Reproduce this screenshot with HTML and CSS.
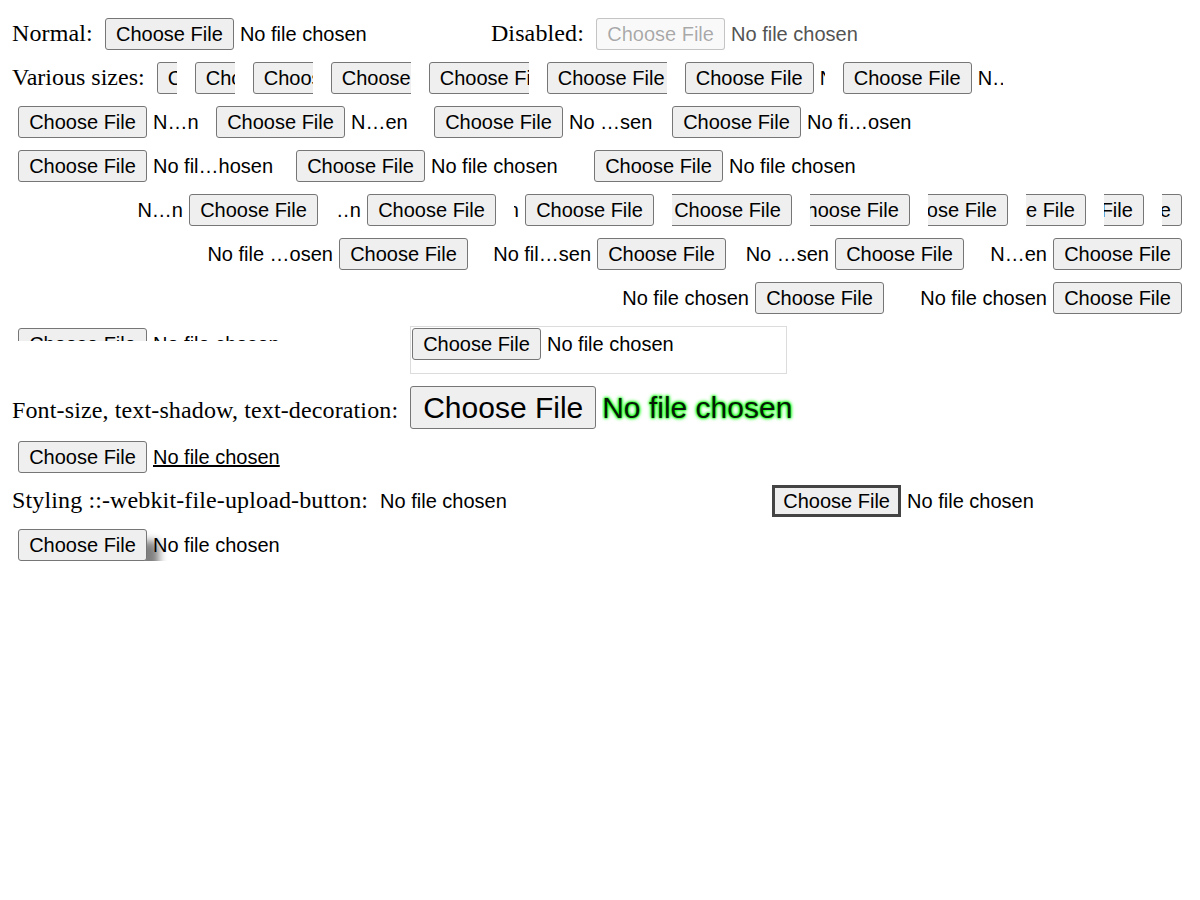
FILE: index.html
```html
<!DOCTYPE html>
<html>
<head>
<meta charset="utf-8">
<title>File inputs</title>
<link rel="stylesheet" href="styles.css">
</head>
<body>
<span class="lbl">Normal:</span> <span class="file"><button class="fbtn" type="button">Choose File</button><span class="flabel">No file chosen</span></span>
<span class="lbl">Disabled:</span> <span class="file is-disabled"><button class="fbtn" type="button" disabled>Choose File</button><span class="flabel">No file chosen</span></span>
<br>
Various sizes:
<span class="file w1"><button class="fbtn" type="button">Choose File</button><span class="flabel"></span></span>
<span class="file w2"><button class="fbtn" type="button">Choose File</button><span class="flabel"></span></span>
<span class="file w3"><button class="fbtn" type="button">Choose File</button><span class="flabel"></span></span>
<span class="file w4"><button class="fbtn" type="button">Choose File</button><span class="flabel"></span></span>
<span class="file w5"><button class="fbtn" type="button">Choose File</button><span class="flabel"></span></span>
<span class="file w6"><button class="fbtn" type="button">Choose File</button><span class="flabel"></span></span>
<span class="file w7"><button class="fbtn" type="button">Choose File</button><span class="flabel">N…n</span></span>
<span class="file w8"><button class="fbtn" type="button">Choose File</button><span class="flabel">N…n</span></span>
<span class="file w9"><button class="fbtn" type="button">Choose File</button><span class="flabel">N…n</span></span>
<span class="file w10"><button class="fbtn" type="button">Choose File</button><span class="flabel">N…en</span></span>
<span class="file w11"><button class="fbtn" type="button">Choose File</button><span class="flabel">No …sen</span></span>
<span class="file w12"><button class="fbtn" type="button">Choose File</button><span class="flabel">No fi…osen</span></span>
<span class="file w13"><button class="fbtn" type="button">Choose File</button><span class="flabel">No fil…hosen</span></span>
<span class="file w14"><button class="fbtn" type="button">Choose File</button><span class="flabel">No file chosen</span></span>
<span class="file w15"><button class="fbtn" type="button">Choose File</button><span class="flabel">No file chosen</span></span>
<div class="rtl" dir="rtl">
<span class="file w1"><button class="fbtn" type="button">Choose File</button><span class="flabel"></span></span>
<span class="file w2"><button class="fbtn" type="button">Choose File</button><span class="flabel"></span></span>
<span class="file w3"><button class="fbtn" type="button">Choose File</button><span class="flabel"></span></span>
<span class="file w4"><button class="fbtn" type="button">Choose File</button><span class="flabel"></span></span>
<span class="file w5"><button class="fbtn" type="button">Choose File</button><span class="flabel"></span></span>
<span class="file w6"><button class="fbtn" type="button">Choose File</button><span class="flabel"></span></span>
<span class="file w7"><button class="fbtn" type="button">Choose File</button><span class="flabel">N…n</span></span>
<span class="file w8"><button class="fbtn" type="button">Choose File</button><span class="flabel">N…n</span></span>
<span class="file w9"><button class="fbtn" type="button">Choose File</button><span class="flabel">N…n</span></span>
<span class="file w10"><button class="fbtn" type="button">Choose File</button><span class="flabel">N…en</span></span>
<span class="file w11"><button class="fbtn" type="button">Choose File</button><span class="flabel">No …sen</span></span>
<span class="file w12"><button class="fbtn" type="button">Choose File</button><span class="flabel">No fil…sen</span></span>
<span class="file w13"><button class="fbtn" type="button">Choose File</button><span class="flabel">No file …osen</span></span>
<span class="file w14"><button class="fbtn" type="button">Choose File</button><span class="flabel">No file chosen</span></span>
<span class="file w15"><button class="fbtn" type="button">Choose File</button><span class="flabel">No file chosen</span></span>
</div>
<span class="file short"><button class="fbtn" type="button">Choose File</button><span class="flabel">No file chosen</span></span>
<span class="file tall"><button class="fbtn" type="button">Choose File</button><span class="flabel">No file chosen</span></span>
<br>
<span class="lbl">Font-size, text-shadow, text-decoration:</span>
<span class="file big"><button class="fbtn" type="button">Choose File</button><span class="flabel">No file chosen</span></span>
<span class="file underline"><button class="fbtn" type="button">Choose File</button><span class="flabel">No file chosen</span></span>
<br>
<span class="lbl">Styling ::-webkit-file-upload-button:</span>
<span class="file no-button"><span class="flabel">No file chosen</span></span>
<span class="file bordered"><button class="fbtn" type="button">Choose File</button><span class="flabel">No file chosen</span></span>
<span class="file shadowed"><button class="fbtn" type="button">Choose File</button><span class="flabel">No file chosen</span></span>
</body>
</html>
```

FILE: styles.css
```css
html {
  background: #fff;
}

body {
  margin: 12px;
  font-family: "Liberation Serif", "Times New Roman", serif;
  font-size: 24px;
  color: #000;
}

.lbl {
  letter-spacing: 0.13px;
}

.file {
  display: inline-flex;
  align-items: baseline;
  box-sizing: border-box;
  width: 18.7em;
  margin: 6px;
  overflow: clip;
  font-family: "Liberation Sans", Arial, sans-serif;
  font-size: 20px;
  letter-spacing: normal;
  white-space: nowrap;
  vertical-align: baseline;
  color: #000;
}

.fbtn {
  flex: none;
  box-sizing: border-box;
  width: 129px;
  height: 32px;
  margin: 0 6px 0 0;
  padding: 0;
  border: 1px solid #767676;
  border-radius: 3px;
  background: #efefef;
  color: #000;
  font: inherit;
  line-height: 30px;
  text-align: center;
  white-space: nowrap;
  overflow: clip;
}

.rtl .fbtn {
  margin: 0 0 0 6px;
}

.flabel {
  flex: 1 1 0;
  min-width: 0;
  overflow: clip;
  white-space: nowrap;
  text-align: start;
}

.is-disabled .fbtn {
  border-color: rgba(118, 118, 118, 0.4);
  background: rgba(239, 239, 239, 0.4);
  color: rgba(16, 16, 16, 0.36);
}

.is-disabled .flabel {
  color: #545454;
}

.w1 { width: 1em; }
.w2 { width: 2em; }
.w3 { width: 3em; }
.w4 { width: 4em; }
.w5 { width: 5em; }
.w6 { width: 6em; }
.w7 { width: 7em; }
.w8 { width: 8em; }
.w9 { width: 9em; }
.w10 { width: 10em; }
.w11 { width: 11em; }
.w12 { width: 12em; }
.w13 { width: 13em; }
.w14 { width: 14em; }
.w15 { width: 15em; }

.short {
  height: 13px;
}

.tall {
  width: 377px;
  height: 48px;
  padding: 1px;
  border: 1px solid #dcdcdc;
}

.big {
  font-size: 30px;
}

.big .fbtn {
  width: 186px;
  height: 43px;
  line-height: 41px;
}

.big .flabel {
  color: #0a1a0a;
  text-shadow: 0 0 2px #00ff00, 0 0 3px #00ff00, 0 0 4px #00ff00;
}

.underline .flabel {
  text-decoration: underline;
}

.bordered .fbtn {
  border: 3px solid #444;
  border-radius: 0;
  line-height: 26px;
}

.shadowed .fbtn {
  box-shadow: 12px 12px 8px #808080;
}
```
